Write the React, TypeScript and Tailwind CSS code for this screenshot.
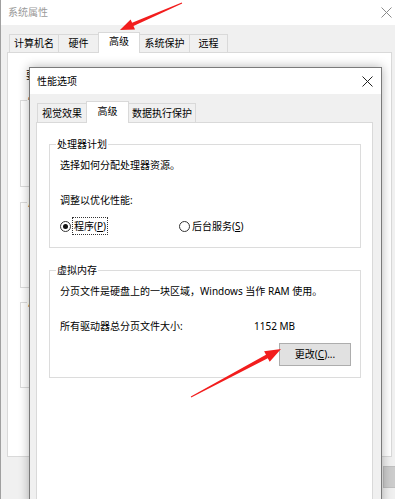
import React from 'react';

const CloseX: React.FC<{ color: string }> = ({ color }) => (
  <svg width="11" height="11" viewBox="0 0 11 11" className="block">
    <path d="M0.5 0.5 L10.5 10.5 M10.5 0.5 L0.5 10.5" stroke={color} strokeWidth="1" fill="none" />
  </svg>
);

type TabProps = { label: string; width: string; active?: boolean; first?: boolean; tall?: string; short?: string };

const Tab: React.FC<TabProps> = ({ label, width, active, first, tall, short }) => (
  <div
    className={[
      'flex items-center justify-center border-t border-l border-r border-[#d9d9d9]',
      width,
      first ? '' : '-ml-px',
      active ? `bg-white relative z-10 -mb-px pb-[3px] ${tall}` : `bg-[#f0f0f0] ${short}`,
    ].join(' ')}
  >
    {label}
  </div>
);

const Radio: React.FC<{ checked?: boolean }> = ({ checked }) => (
  <span className="flex items-center justify-center w-[11px] h-[11px] rounded-full border border-[#333] bg-white shrink-0">
    {checked && <span className="w-[5px] h-[5px] rounded-full bg-[#111]" />}
  </span>
);

const PerformanceOptions: React.FC = () => (
  <div className="absolute left-[29px] top-[67px] w-[353px] h-[440px] border border-[#7a7a7a] bg-[#f0f0f0] shadow-[0_0_10px_rgba(0,0,0,0.3)] flex flex-col">
    <div className="h-[26px] bg-white flex items-center justify-between pl-[7px] pr-[8px] shrink-0">
      <span>性能选项</span>
      <CloseX color="#222" />
    </div>
    <div className="h-[28px] flex items-end pl-[7px] shrink-0">
      <Tab label="视觉效果" width="w-[50px]" first short="h-[19px]" />
      <Tab label="高级" width="w-[43px]" active tall="h-[22px]" />
      <Tab label="数据执行保护" width="w-[68px]" short="h-[19px]" />
    </div>
    <div className="ml-[6px] w-[337px] flex-1 bg-white border border-[#d9d9d9] pt-[15px] pl-[12px]">
      <fieldset className="w-[312px] border border-[#dcdcdc] pb-[12px]">
        <legend className="ml-[6px] px-[1px] leading-[12px]">处理器计划</legend>
        <div className="pl-[10px]">
          <p className="mt-[8px] leading-[14px]">选择如何分配处理器资源。</p>
          <p className="mt-[21px] leading-[14px]">调整以优化性能:</p>
          <div className="mt-[10px] h-[18px] flex items-center">
            <div className="w-[119px] flex items-center gap-[1px]">
              <Radio checked />
              <span className="outline outline-1 outline-dotted outline-[#333] px-[1px] leading-[16px] ml-[1px]">
                程序(<u>P</u>)
              </span>
            </div>
            <div className="flex items-center gap-[2px]">
              <Radio />
              <span className="leading-[16px]">
                后台服务(<u>S</u>)
              </span>
            </div>
          </div>
        </div>
      </fieldset>

      <fieldset className="mt-[16px] w-[312px] border border-[#dcdcdc] pb-[11px]">
        <legend className="ml-[6px] px-[1px] leading-[12px]">虚拟内存</legend>
        <div className="pl-[10px] pr-[9px]">
          <p className="mt-[8px] leading-[14px]">分页文件是硬盘上的一块区域，Windows 当作 RAM 使用。</p>
          <div className="mt-[21px] flex leading-[14px]">
            <span className="w-[194px]">所有驱动器总分页文件大小:</span>
            <span>1152 MB</span>
          </div>
          <div className="mt-[10px] flex justify-end">
            <button className="w-[72px] h-[23px] bg-[#e1e1e1] border border-[#adadad] flex items-center justify-center">
              更改(<u>C</u>)...
            </button>
          </div>
        </div>
      </fieldset>
    </div>
  </div>
);

const Arrows: React.FC = () => (
  <svg className="absolute left-0 top-0 pointer-events-none" width="395" height="499" viewBox="0 0 395 499">
    <polygon
      fill="#f21d1d"
      points="120,30 130.6,19.4 132.1,22.7 181.8,2.5 182.2,3.5 133.5,26.1 135,29.4"
    />
    <polygon
      fill="#f21d1d"
      points="281,349 264.1,351.2 266,354.7 190.8,396.6 191.2,397.4 267.8,358.3 269.7,361.8"
    />
  </svg>
);

export default function App() {
  return (
    <div className="relative w-[395px] h-[499px] overflow-hidden bg-[#f0f0f0] text-[10px] text-black font-['Noto_Sans','Noto_Sans_CJK_SC',sans-serif]">
      <div className="h-full border-l border-[#a0a0a0] flex flex-col">
        <div className="h-[25px] bg-white flex items-center justify-between pl-[7px] pr-[3px] shrink-0">
          <span className="text-[#9a9a9a]">系统属性</span>
          <CloseX color="#8a8a8a" />
        </div>
        <div className="h-[27px] flex items-end pl-[8px] shrink-0">
          <Tab label="计算机名" width="w-[50px]" first short="h-[18px]" />
          <Tab label="硬件" width="w-[41px]" short="h-[18px]" />
          <Tab label="高级" width="w-[42px]" active tall="h-[21px]" />
          <Tab label="系统保护" width="w-[51px]" short="h-[18px]" />
          <Tab label="远程" width="w-[39px]" short="h-[18px]" />
        </div>
        {/* outer "advanced" page, mostly covered by the performance dialog */}
        <div className="ml-[6px] w-[385px] h-[405px] bg-white border border-[#d9d9d9] pt-[15px] pl-[12px] shrink-0">
          <p className="pl-[6px] leading-[14px]">要</p>
          <fieldset className="mt-[12px] w-[360px] h-[93px] border border-[#dcdcdc]">
            <legend className="ml-[6px] px-[1px] leading-[12px]">性</legend>
          </fieldset>
          <fieldset className="mt-[9px] w-[360px] h-[92px] border border-[#dcdcdc]">
            <legend className="ml-[6px] px-[1px] leading-[12px]">用</legend>
          </fieldset>
          <fieldset className="mt-[8px] w-[360px] h-[92px] border border-[#dcdcdc]">
            <legend className="ml-[6px] px-[1px] leading-[12px]">启</legend>
          </fieldset>
        </div>
        <div className="flex justify-end pr-0 pt-[9px]">
          <div className="w-[12px] h-[22px] bg-[#cccccc] border-l border-t border-b border-[#bfbfbf]" />
        </div>
      </div>
      <PerformanceOptions />
      <Arrows />
    </div>
  );
}
